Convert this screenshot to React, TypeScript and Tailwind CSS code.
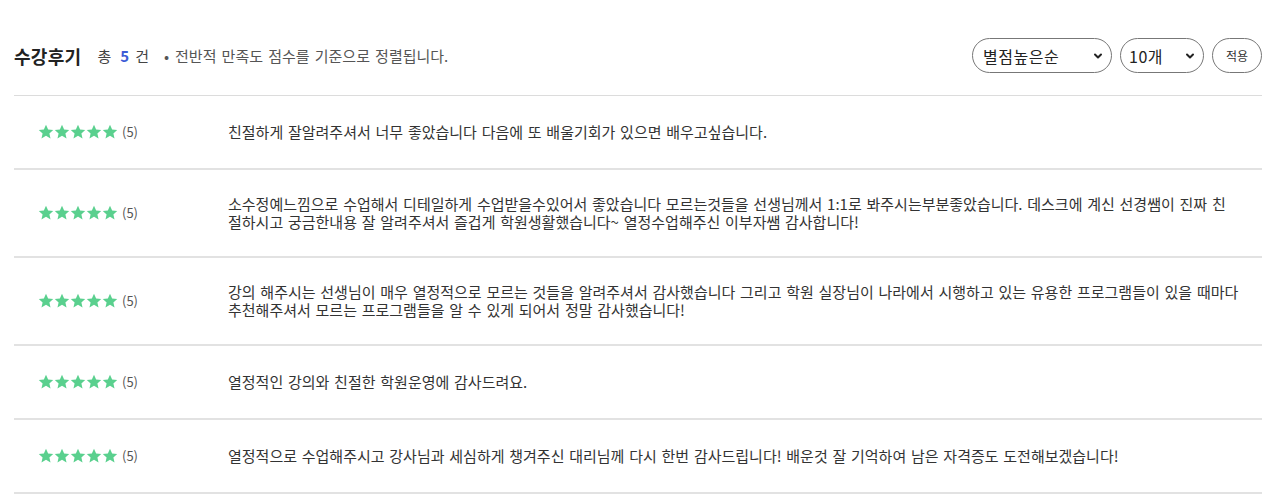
import React from "react";

const reviews = [
  "친절하게 잘알려주셔서 너무 좋았습니다 다음에 또 배울기회가 있으면 배우고싶습니다.",
  "소수정예느낌으로 수업해서 디테일하게 수업받을수있어서 좋았습니다 모르는것들을 선생님께서 1:1로 봐주시는부분좋았습니다. 데스크에 계신 선경쌤이 진짜 친절하시고 궁금한내용 잘 알려주셔서 즐겁게 학원생활했습니다~ 열정수업해주신 이부자쌤 감사합니다!",
  "강의 해주시는 선생님이 매우 열정적으로 모르는 것들을 알려주셔서 감사했습니다 그리고 학원 실장님이 나라에서 시행하고 있는 유용한 프로그램들이 있을 때마다 추천해주셔서 모르는 프로그램들을 알 수 있게 되어서 정말 감사했습니다!",
  "열정적인 강의와 친절한 학원운영에 감사드려요.",
  "열정적으로 수업해주시고 강사님과 세심하게 챙겨주신 대리님께 다시 한번 감사드립니다! 배운것 잘 기억하여 남은 자격증도 도전해보겠습니다!",
];

function Star() {
  return (
    <svg width="16" height="16" viewBox="0 0 24 24" className="block">
      <path
        d="M12 1.2l3.2 7 7.6.8-5.7 5.1 1.7 7.6L12 17.8l-6.8 3.9 1.7-7.6-5.7-5.1 7.6-.8z"
        fill="#5ad08e"
      />
    </svg>
  );
}

function Chevron() {
  return (
    <svg width="10" height="10" viewBox="0 0 10 10" className="pointer-events-none absolute right-[9px] top-1/2 -translate-y-1/2">
      <path d="M2 3.5l3 3 3-3" fill="none" stroke="#222" strokeWidth="2" strokeLinecap="round" strokeLinejoin="round" />
    </svg>
  );
}

export default function App() {
  return (
    <div
      className="ml-[14px] w-[1248px] bg-white text-[#333]"
      style={{ fontFamily: '"Noto Sans CJK KR", "Noto Sans", sans-serif' }}
    >
      <div className="flex items-center justify-between pt-[38px] pb-[22px] border-b border-[#dcdcdc]">
        <div className="flex items-center">
          <h2 className="text-[18px] font-bold text-[#222] leading-none tracking-[0.3px]">수강후기</h2>
          <span className="ml-[16px] text-[15px] text-[#444] leading-none">
            총<b className="ml-[9px] mr-[6px] text-[#3d5cd6] font-bold">5</b>건
          </span>
          <span className="ml-[15px] text-[15px] text-[#555] leading-none [word-spacing:1.8px]">
            <span className="mr-[6px]">•</span>전반적 만족도 점수를 기준으로 정렬됩니다.
          </span>
        </div>
        <div className="flex items-center gap-[8px]">
          <div className="relative">
            <select className="appearance-none w-[140px] h-[35px] rounded-full border border-[#777] bg-white pl-[10px] pr-[24px] text-[16px] tracking-[0.5px] text-[#222] outline-none" defaultValue="a">
              <option value="a">별점높은순</option>
            </select>
            <Chevron />
          </div>
          <div className="relative">
            <select className="appearance-none w-[84px] h-[35px] rounded-full border border-[#777] bg-white pl-[8px] pr-[22px] text-[16px] tracking-[0.5px] text-[#222] outline-none" defaultValue="10">
              <option value="10">10개</option>
            </select>
            <Chevron />
          </div>
          <button className="w-[50px] h-[35px] rounded-full border border-[#777] bg-white text-[12px] text-[#333]">
            적용
          </button>
        </div>
      </div>
      <ul>
        {reviews.map((r, i) => (
          <li key={i} className="flex items-center min-h-[74px] py-[25px] border-b-2 border-[#e2e2e2]">
            <div className="w-[214px] shrink-0 pl-[24px] flex items-center">
              <div className="flex">
                <Star />
                <Star />
                <Star />
                <Star />
                <Star />
              </div>
              <span className="ml-[4px] text-[13px] text-[#555]">(5)</span>
            </div>
            <p className="w-[1011px] text-[15px] leading-[18px] text-[#333] [word-spacing:1.4px]">{r}</p>
          </li>
        ))}
      </ul>
    </div>
  );
}
